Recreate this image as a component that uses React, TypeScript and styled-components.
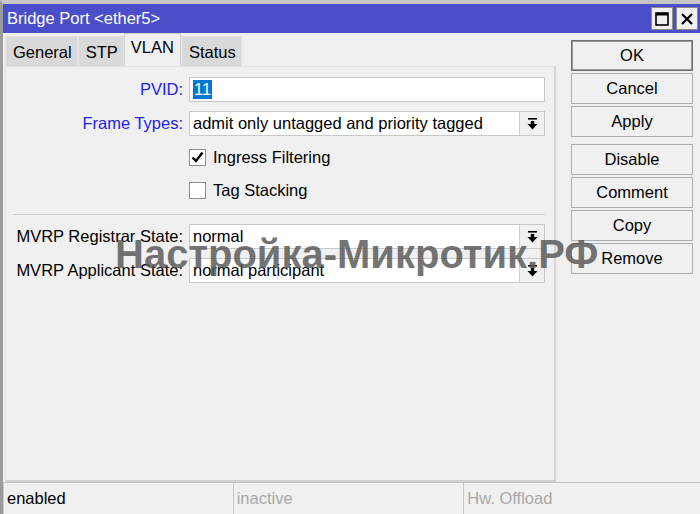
import React from 'react';
import styled, { createGlobalStyle } from 'styled-components';

const GlobalStyle = createGlobalStyle`
  html, body { margin: 0; padding: 0; background: #f0f0f0; }
  body { font-family: 'Liberation Sans', Arial, sans-serif; font-size: 16.5px; color: #000; }
`;

const Window = styled.div`
  position: relative;
  width: 700px;
  height: 514px;
  box-sizing: border-box;
  border-top: 4px solid #c6c6c6;
  border-left: 3px solid #9c9c9c;
  background: #f0f0f0;
  display: flex;
  flex-direction: column;
  overflow: hidden;
`;

const TitleBar = styled.div`
  height: 29px;
  background: #4a4fc9;
  color: #fff;
  display: flex;
  align-items: center;
  padding: 0 2px 0 4px;
  flex-shrink: 0;
`;

const Title = styled.span`
  flex: 1;
  font-size: 16.5px;
  padding-bottom: 1px;
`;

const TitleButton = styled.div`
  width: 20px;
  height: 21px;
  margin-left: 3px;
  background: #f0f0f0;
  border: 1px solid #8c8c8c;
  display: flex;
  align-items: center;
  justify-content: center;
`;

const Main = styled.div`
  flex: 1;
  display: flex;
  min-height: 0;
`;

const LeftColumn = styled.div`
  width: 553px;
  display: flex;
  flex-direction: column;
  padding-left: 2px;
  box-sizing: border-box;
`;

const Tabs = styled.div`
  display: flex;
  align-items: flex-end;
  height: 33px;
`;

const Tab = styled.div<{ $active?: boolean }>`
  height: ${p => (p.$active ? 33 : 30)}px;
  box-sizing: border-box;
  padding: ${p => (p.$active ? '4px 6px 0' : '6px 5px 0 7px')};
  background: ${p => (p.$active ? '#f0f0f0' : '#d9d9d9')};
  border: 1px solid ${p => (p.$active ? '#d2d2d2' : '#e4e4e4')};
  border-bottom: none;
`;

const Panel = styled.div`
  flex: 1;
  border: 1px solid #e2e2e2;
  border-right: 2px solid #d4d4d4;
  border-bottom: 2px solid #cfcfcf;
  padding: 10px 9px 0 0;
`;

const Form = styled.div`
  display: grid;
  grid-template-columns: 177px 356px;
  column-gap: 6px;
  row-gap: 9px;
  align-items: center;
`;

const Label = styled.div<{ $blue?: boolean }>`
  text-align: right;
  white-space: nowrap;
  color: ${p => (p.$blue ? '#2222f0' : '#000')};
`;

const Field = styled.div`
  height: 25px;
  box-sizing: border-box;
  background: #fff;
  border: 1px solid #c9c9c9;
  display: flex;
  align-items: center;
`;

const FieldText = styled.span`
  flex: 1;
  padding-left: 3px;
  white-space: nowrap;
  overflow: hidden;
`;

const Selected = styled.span`
  background: #0078d7;
  color: #fff;
  padding: 1px 1px;
`;

const DropButton = styled.div`
  width: 24px;
  height: 23px;
  background: #f0f0f0;
  border-left: 1px solid #d0d0d0;
  display: flex;
  align-items: center;
  justify-content: center;
`;

const CheckRow = styled.label`
  grid-column: 2;
  height: 24px;
  display: flex;
  align-items: center;
  gap: 7px;
`;

const Box = styled.span`
  width: 17px;
  height: 17px;
  box-sizing: border-box;
  background: #fff;
  border: 1px solid #8f8f8f;
  display: flex;
  align-items: center;
  justify-content: center;
`;

const Separator = styled.div`
  grid-column: 1 / 3;
  height: 3px;
  margin-left: 7px;
  border-bottom: 1px solid #cfcfcf;
`;

const ButtonColumn = styled.div`
  flex: 1;
  display: flex;
  flex-direction: column;
  align-items: flex-start;
  padding: 7px 0 0 15px;
  gap: 2px;
`;

const Button = styled.div<{ $default?: boolean; $spaced?: boolean }>`
  width: 122px;
  height: 31px;
  box-sizing: border-box;
  border: 1px solid ${p => (p.$default ? '#6f6f6f' : '#adadad')};
  box-shadow: ${p => (p.$default ? 'inset 0 0 0 1px #9a9a9a' : 'none')};
  background: #f0f0f0;
  display: flex;
  align-items: center;
  justify-content: center;
  margin-top: ${p => (p.$spaced ? 5 : 0)}px;
`;

const StatusBar = styled.div`
  height: 31px;
  display: flex;
  border-top: 1px solid #c4c4c4;
  flex-shrink: 0;
`;

const StatusCell = styled.div<{ $width: number; $muted?: boolean }>`
  width: ${p => p.$width}px;
  box-sizing: border-box;
  border-left: 1px solid #c8c8c8;
  margin-right: 2px;
  padding: 6px 0 0 3px;
  color: ${p => (p.$muted ? '#a8a8a8' : '#000')};
`;

const Watermark = styled.div`
  position: absolute;
  left: 112px;
  top: 228px;
  font-size: 40px;
  font-weight: bold;
  color: rgba(85, 85, 85, 0.82);
  white-space: nowrap;
  pointer-events: none;
`;

const DropIcon = () => (
  <svg width="11" height="12" viewBox="0 0 11 12">
    <rect x="1" y="0" width="9" height="1.6" fill="#000" />
    <rect x="3.8" y="3" width="3.4" height="3.5" fill="#000" />
    <polygon points="0.5,6 10.5,6 5.5,11.5" fill="#000" />
  </svg>
);

const Select = ({ value }: { value: string }) => (
  <Field>
    <FieldText>{value}</FieldText>
    <DropButton><DropIcon /></DropButton>
  </Field>
);

const Check = ({ checked }: { checked?: boolean }) => (
  <Box>
    {checked && (
      <svg width="13" height="12" viewBox="0 0 13 12">
        <path d="M1.5 6.5 L5 10 L11.5 1.5" stroke="#000" strokeWidth="2.4" fill="none" />
      </svg>
    )}
  </Box>
);

const tabs = ['General', 'STP', 'VLAN', 'Status'];
const buttons = ['OK', 'Cancel', 'Apply', 'Disable', 'Comment', 'Copy', 'Remove'];

export default function App() {
  return (
    <React.Fragment>
      <GlobalStyle />
      <Window>
        <TitleBar>
          <Title>Bridge Port &lt;ether5&gt;</Title>
          <TitleButton>
            <svg width="14" height="14" viewBox="0 0 14 14">
              <rect x="1" y="1" width="12" height="12" fill="none" stroke="#000" strokeWidth="1.6" />
              <rect x="1" y="1" width="12" height="2.5" fill="#000" />
            </svg>
          </TitleButton>
          <TitleButton>
            <svg width="12" height="12" viewBox="0 0 12 12">
              <path d="M1 1 L11 11 M11 1 L1 11" stroke="#000" strokeWidth="2.2" />
            </svg>
          </TitleButton>
        </TitleBar>
        <Main>
          <LeftColumn>
            <Tabs>
              {tabs.map(t => (
                <Tab key={t} $active={t === 'VLAN'}>{t}</Tab>
              ))}
            </Tabs>
            <Panel>
              <Form>
                <Label $blue>PVID:</Label>
                <Field>
                  <FieldText><Selected>11</Selected></FieldText>
                </Field>
                <Label $blue>Frame Types:</Label>
                <Select value="admit only untagged and priority tagged" />
                <CheckRow><Check checked />Ingress Filtering</CheckRow>
                <CheckRow><Check />Tag Stacking</CheckRow>
                <Separator />
                <Label>MVRP Registrar State:</Label>
                <Select value="normal" />
                <Label>MVRP Applicant State:</Label>
                <Select value="normal participant" />
              </Form>
            </Panel>
          </LeftColumn>
          <ButtonColumn>
            {buttons.map(b => (
              <Button key={b} $default={b === 'OK'} $spaced={b === 'Disable'}>{b}</Button>
            ))}
          </ButtonColumn>
        </Main>
        <StatusBar>
          <StatusCell $width={229}>enabled</StatusCell>
          <StatusCell $width={230} $muted>inactive</StatusCell>
          <StatusCell $width={236} $muted>Hw. Offload</StatusCell>
        </StatusBar>
        <Watermark>Настройка-Микротик.РФ</Watermark>
      </Window>
    </React.Fragment>
  );
}
